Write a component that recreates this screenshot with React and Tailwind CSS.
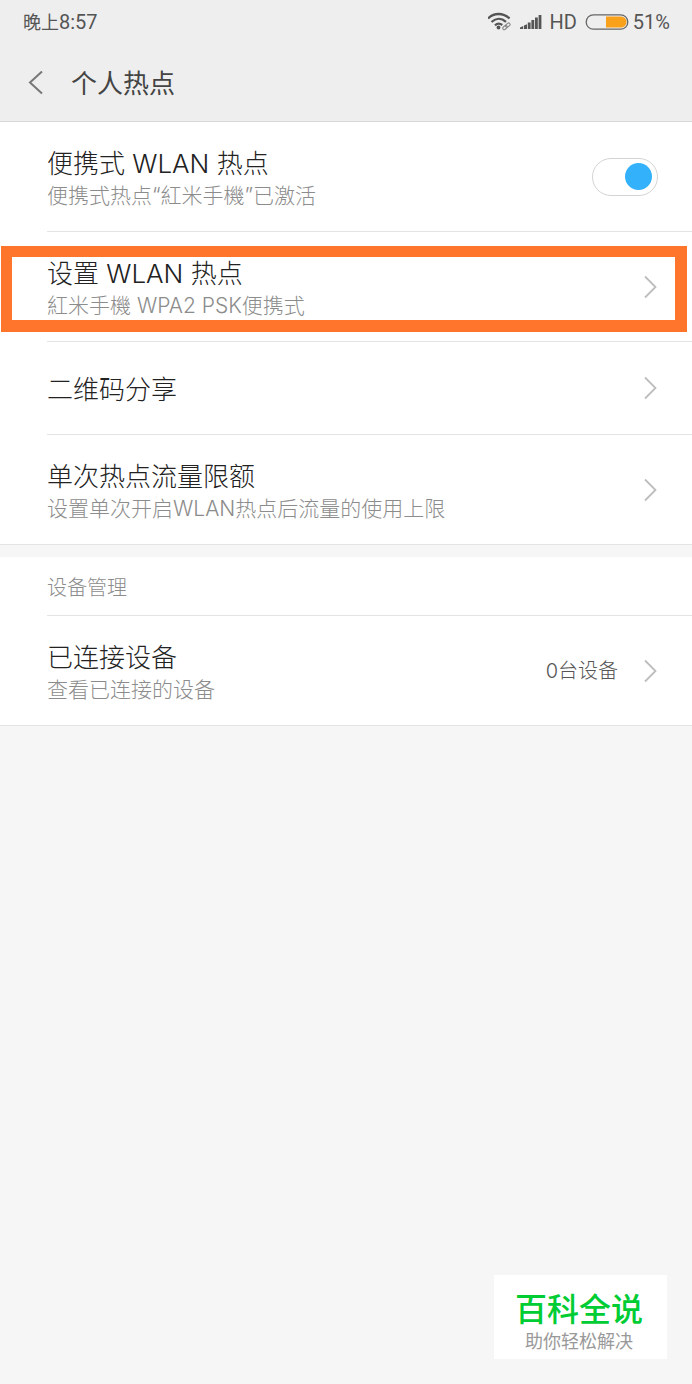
import { useState } from "react";

function WifiIcon() {
    return (
        <svg className="w-6 h-5" viewBox="0 0 24 20" fill="none" stroke="#555" strokeWidth="2.3">
            <path d="M0 6.500C6 0.500 15 0.500 21.500 6.500" />
            <path d="M3.500 10C8 5.800 13.500 5.800 18 9.800" />
            <path d="M7 13.400C9.300 11.200 11.800 11.200 14.300 13" />
            <circle cx="10.500" cy="15.500" r="1.900" fill="#555" stroke="none" />
            <g stroke="#888" strokeWidth="1.100">
                <rect x="14.500" y="14" width="5" height="3" rx="1.500" transform="rotate(-40 17 15.500)" />
                <rect x="17.300" y="11.600" width="5" height="3" rx="1.500" transform="rotate(-40 19.800 13.100)" />
            </g>
        </svg>
    );
}

function SignalIcon() {
    return (
        <svg className="w-6 h-4" viewBox="0 0 24 16" fill="#555">
            <path d="M0 15V13.500L3.200 12V15Z" />
            <path d="M4 15V11.500L7 10.200V15Z" />
            <rect x="7.800" y="8.500" width="2.800" height="6.500" />
            <rect x="11.400" y="6" width="2.800" height="9" />
            <rect x="15" y="3.500" width="2.800" height="11.500" />
            <rect x="18.600" y="1" width="2.800" height="14" />
        </svg>
    );
}

function BatteryIcon() {
    return (
        <svg className="w-11 h-4" viewBox="0 0 44 16" fill="none">
            <path d="M21 2.500H36a5.500 5.500 0 0 1 0 11H21Z" fill="#f9a11b" />
            <rect x="1.200" y="0.800" width="41.600" height="14.400" rx="7.200" stroke="#666" strokeWidth="1.300" />
        </svg>
    );
}

function Chevron() {
    return (
        <svg className="w-4 h-6 shrink-0" viewBox="0 0 16 24" fill="none" stroke="#bdbdbd" strokeWidth="1.800">
            <path d="M3 1.500L13.500 12L3 22.500" />
        </svg>
    );
}

function RowText({ title, note }) {
    return (
        <span className="flex flex-col pt-1">
            <span className="text-[26px] leading-[34px] text-[#222]">{title}</span>
            {note && <span className="text-[21px] leading-[30px] text-[#8c8c8c]">{note}</span>}
        </span>
    );
}

function LinkRow({ title, note, value, last, highlighted, short }) {
    return (
        <li className="relative pl-[47px]">
            <button
                type="button"
                className={`flex w-full items-center justify-between pr-[34px] text-left ${short ? "h-[93px]" : last ? "h-[109px]" : "h-[110px]"} ${last ? "" : "border-b border-[#e4e4e4]"}`}
            >
                <RowText title={title} note={note} />
                <span className="flex items-center gap-6">
                    {value && <span className="text-[20px] leading-[30px] text-[#555]">{value}</span>}
                    <Chevron />
                </span>
            </button>
            {highlighted && (
                <div className="pointer-events-none absolute top-[14px] right-[5px] bottom-[10px] left-px border-[12px] border-t-[11px] border-l-[11px] border-[#ff752b]" />
            )}
        </li>
    );
}

export default function App() {
    const [enabled, setEnabled] = useState(true);

    return (
        <div className="min-h-screen bg-[#f6f6f6] font-light font-[Inter,'Noto_Sans_CJK_SC',sans-serif]">
            {/* Header */}
            <header className="border-b border-[#d8d8d8] bg-[#eee]">
                <div className="flex h-[44px] items-center justify-between pr-[22px] pl-[23px] text-[20px] font-normal text-[#555] font-[Roboto,'Noto_Sans_CJK_SC',sans-serif]">
                    <span><span className="text-[18px]">晚上</span>8:57</span>
                    <div className="flex items-center">
                        <WifiIcon />
                        <span className="ml-2 flex items-center gap-[5px]">
                            <SignalIcon />
                            <span>HD</span>
                        </span>
                        <span className="ml-2 flex items-center gap-1">
                            <BatteryIcon />
                            <span>51%</span>
                        </span>
                    </div>
                </div>
                <div className="flex h-[77px] items-center pl-[27px]">
                    <button type="button" aria-label="返回" className="mr-7">
                        <svg className="w-4 h-6" viewBox="0 0 16 24" fill="none" stroke="#777" strokeWidth="2">
                            <path d="M15 0.500L3 11.500L15 22.500" />
                        </svg>
                    </button>
                    <h1 className="pt-[2px] text-[26px] leading-[34px] font-normal text-[#444]">个人热点</h1>
                </div>
            </header>

            <main>
                {/* Hotspot settings */}
                <ul className="border-b border-[#e4e4e4] bg-white">
                    <li className="pl-[47px]">
                        <label className="flex h-[110px] items-center justify-between border-b border-[#e4e4e4] pr-[34px]">
                            <RowText title="便携式 WLAN 热点" note="便携式热点“紅米手機”已激活" />
                            <input
                                type="checkbox"
                                role="switch"
                                checked={enabled}
                                onChange={(e) => setEnabled(e.target.checked)}
                                className="flex h-[38px] w-[66px] shrink-0 appearance-none items-center rounded-full border border-[#d4d4d4] bg-white px-[5px] before:size-[27px] before:rounded-full before:bg-[#c4c4c4] checked:justify-end checked:before:bg-[#33b1fa]"
                            />
                        </label>
                    </li>
                    <LinkRow title="设置 WLAN 热点" note="紅米手機 WPA2 PSK便携式" highlighted />
                    <LinkRow title="二维码分享" short />
                    <LinkRow title="单次热点流量限额" note="设置单次开启WLAN热点后流量的使用上限" last />
                </ul>

                {/* Devices */}
                <section className="mt-3 border-b border-[#e4e4e4] bg-white">
                    <div className="pl-[47px]">
                        <h2 className="flex h-[59px] items-center border-b border-[#e4e4e4] pt-[3px] text-[20px] leading-[30px] text-[#8c8c8c]">
                            设备管理
                        </h2>
                    </div>
                    <ul>
                        <LinkRow title="已连接设备" note="查看已连接的设备" value="0台设备" last />
                    </ul>
                </section>
            </main>

            {/* Site badge */}
            <aside className="fixed right-[25px] bottom-[25px] bg-white pt-[15px] pr-6 pb-[5px] pl-[21px] text-center">
                <p className="text-[32px] leading-[40px] font-medium text-[#0c3]">百科全说</p>
                <p className="text-[18px] leading-6 font-normal text-[#999]">助你轻松解决</p>
            </aside>
        </div>
    );
}
